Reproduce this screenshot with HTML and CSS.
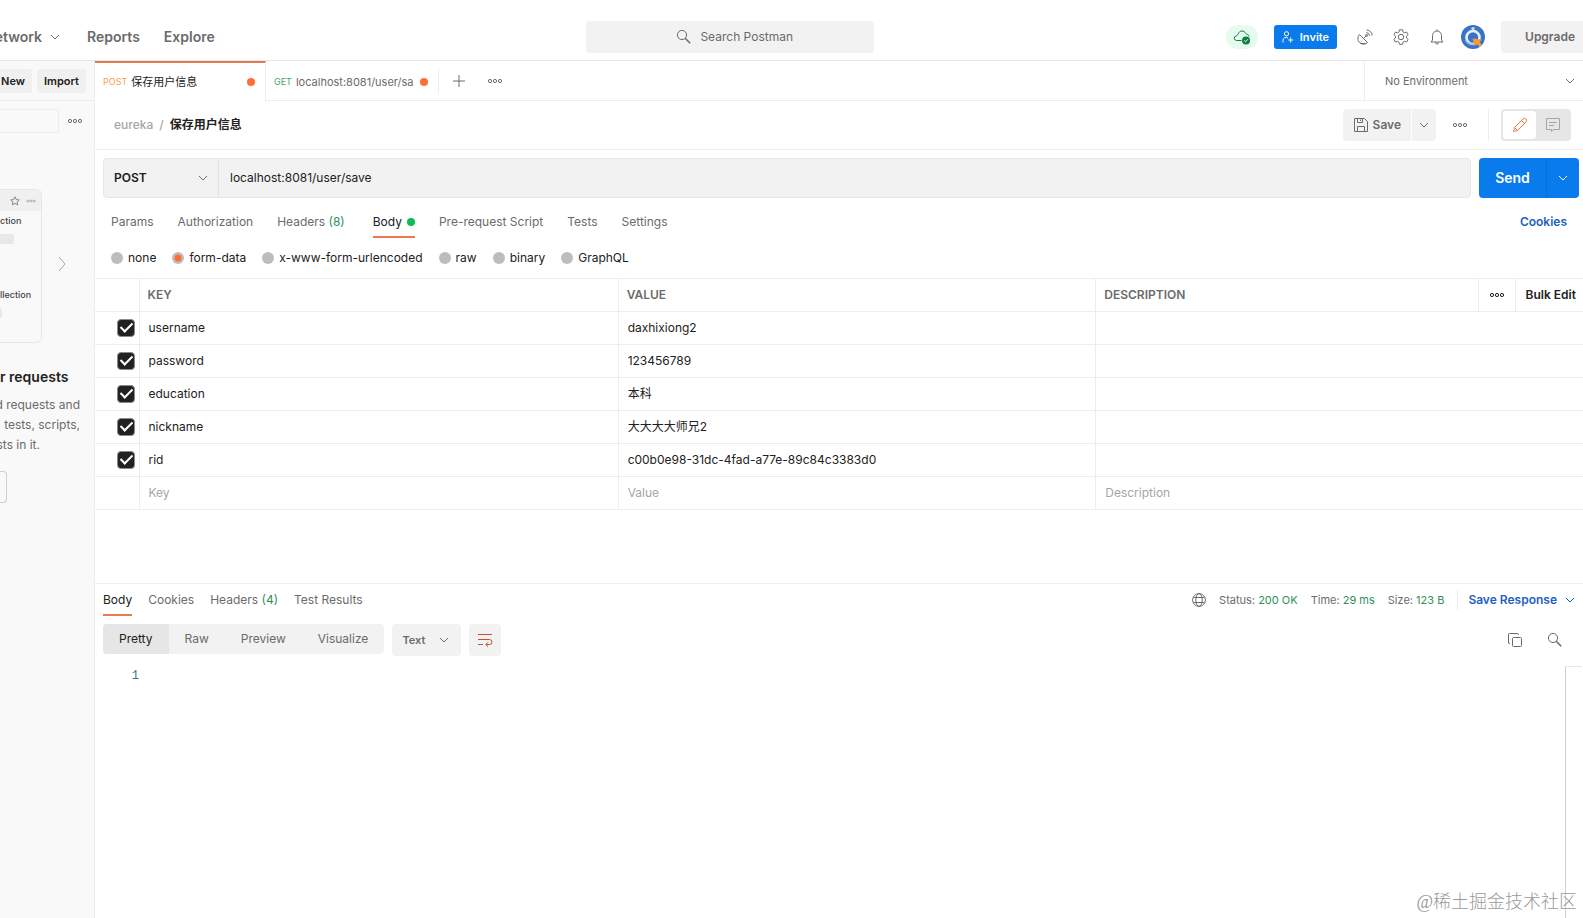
FILE: index.html
```html
<!DOCTYPE html>
<html lang="en">
<head>
    <meta charset="UTF-8">
    <meta name="viewport" content="width=device-width, initial-scale=1.0">
    <title>Postman</title>
    <link rel="stylesheet" href="styles.css">
</head>
<body>
    <!-- Shared icons -->
    <svg class="sprite" aria-hidden="true">
        <symbol id="chevron" viewBox="0 0 10 10"><path d="M1 3l4 4 4-4"/></symbol>
        <symbol id="dots" viewBox="0 0 16 6"><circle cx="3" cy="3" r="1.6"/><circle cx="8" cy="3" r="1.6"/><circle cx="13" cy="3" r="1.6"/></symbol>
        <symbol id="search" viewBox="0 0 16 16"><circle cx="6" cy="6" r="4.6"/><path d="M9.2 9.2l5 5" stroke-width="1.6"/></symbol>
    </svg>

    <header class="topbar">
        <nav class="topnav">
            <a href="#" class="network">etwork <svg class="icon chevron"><use href="#chevron"/></svg></a>
            <a href="#">Reports</a>
            <a href="#">Explore</a>
        </nav>
        <button class="search"><svg class="icon i16"><use href="#search"/></svg>Search Postman</button>
        <div class="top-actions">
            <button class="sync" aria-label="Synced">
                <svg class="icon i18" viewBox="0 0 18 18"><path d="M8.500 12.500H3.500A2.300 2.300 0 0 1 3 8C5.500 7.500 5 3 9 3C12 3 12.500 5.500 13.500 6.200C15.500 6.500 16 7.500 16 8.500"/><circle cx="13" cy="12.500" r="4" class="solid"/><path d="M11.200 12.500l1.300 1.300 2.300-2.500" class="tick"/></svg>
            </button>
            <button class="invite">
                <svg class="icon i12" viewBox="0 0 12 12"><circle cx="4.500" cy="2.800" r="2.100"/><path d="M1 11.500V9.800A3 3 0 0 1 6 7.200M8.700 6.500v5M6.200 9h5"/></svg>
                Invite
            </button>
            <button class="plain" aria-label="Capture requests">
                <svg class="icon i16" viewBox="0 0 16 16"><path d="M2.500 5.500a5.600 5.600 0 0 0 8 8zM3.500 14.500h5M6.500 9.500l3-3"/><circle cx="9.600" cy="6.400" r="1"/><path d="M9.300 3.600a3.200 3.200 0 0 1 3.200 3.200M9.500 1a5.600 5.600 0 0 1 5.600 5.600"/></svg>
            </button>
            <button class="plain" aria-label="Settings">
                <svg class="icon i16" viewBox="0 0 16 16"><path d="M6.500.8h3l.5 2.100 1.500.9 2.100-.7 1.500 2.600-1.600 1.500v1.700l1.600 1.500-1.500 2.600-2.100-.7-1.500.9-.5 2.100h-3L6 13.200l-1.500-.9-2.100.7-1.500-2.600 1.600-1.500V7.200L.9 5.700l1.500-2.600 2.100.7L6 2.900z"/><circle cx="8" cy="8" r="2.700"/></svg>
            </button>
            <button class="plain" aria-label="Notifications">
                <svg class="icon i16" viewBox="0 0 16 16"><path d="M2 13h12l-1.500-2V6.500a4.500 4.500 0 0 0-9 0V11zM8 2V.5M6.500 13.500a1.500 1.500 0 0 0 3 0"/></svg>
            </button>
            <button class="plain avatar" aria-label="Account">
                <svg viewBox="0 0 24 24"><circle cx="12" cy="12" r="12" fill="#3972c6"/><circle cx="12" cy="12.500" r="6.500" fill="#3972c6" stroke="#e8f0fb" stroke-width="2.600"/><path d="M4.500 15a8 6 0 0 0 10 4" fill="none" stroke="#9dbde8" stroke-width="1.500"/><circle cx="12" cy="3.600" r="1.700" fill="#c9dbf3"/><path d="M11.500 13.500l9.500 1-2.500 2.500 2.500 3-2.500 2-2.500-3-2.500 2z" fill="#f59a35"/></svg>
            </button>
            <button class="upgrade">Upgrade</button>
        </div>
    </header>

    <div class="workspace">
        <aside class="sidebar">
            <div class="side-head">
                <button>New</button>
                <button>Import</button>
            </div>
            <div class="side-filter">
                <input type="text" aria-label="Filter">
                <button class="plain" aria-label="More"><svg class="icon dots"><use href="#dots"/></svg></button>
            </div>
            <div class="carousel">
                <div class="card">
                    <div class="card-head">
                        <svg class="icon i10" viewBox="0 0 10 10"><path d="M5 .8l1.300 2.800 3 .3-2.200 2 .6 3L5 7.400 2.300 8.900l.6-3-2.200-2 3-.3z"/></svg>
                        <svg class="icon i10" viewBox="0 0 16 6"><use href="#dots"/></svg>
                    </div>
                    <div class="card-item">ction<span class="bar"></span></div>
                    <div class="card-item">llection<span class="bar short"></span></div>
                </div>
                <button class="plain next" aria-label="Next"><svg class="icon" viewBox="0 0 8 16"><path d="M1 1l6 7-6 7"/></svg></button>
            </div>
            <h2>r requests</h2>
            <p class="side-text">
                <span>d requests and</span>
                <span>tests, scripts,</span>
                <span class="last">sts in it.</span>
            </p>
            <button class="create" aria-label="Create collection"></button>
        </aside>

        <main class="main">
            <div class="tabbar">
                <button class="tab active"><span class="method post">POST</span><span class="tab-name">保存用户信息</span><i class="dot"></i></button>
                <button class="tab"><span class="method get">GET</span><span class="tab-name">localhost:8081/user/sa</span><i class="dot"></i></button>
                <div class="tab-tools">
                    <button class="plain" aria-label="New tab"><svg class="icon i12" viewBox="0 0 12 12"><path d="M6 0v12M0 6h12"/></svg></button>
                    <button class="plain" aria-label="Tab options"><svg class="icon dots"><use href="#dots"/></svg></button>
                </div>
                <button class="env">No Environment <svg class="icon chevron"><use href="#chevron"/></svg></button>
            </div>

            <div class="titlebar">
                <div class="crumbs"><a href="#">eureka</a><span>/</span><strong>保存用户信息</strong></div>
                <div class="title-actions">
                    <div class="split">
                        <button class="save">
                            <svg class="icon i16" viewBox="0 0 16 16"><path d="M1.500 1.500h10l3 3v10h-13zM4.500 1.500v4h5v-4M4.500 14.500v-5h7v5M7.500 2.500v1.500"/></svg>
                            Save
                        </button>
                        <button class="save-more" aria-label="Save options"><svg class="icon chevron"><use href="#chevron"/></svg></button>
                    </div>
                    <button class="plain more" aria-label="More actions"><svg class="icon dots"><use href="#dots"/></svg></button>
                    <div class="toggle">
                        <button class="on" aria-label="Edit"><svg class="icon i16" viewBox="0 0 16 16"><path d="M1.500 14.500l1-4L11 2a1.800 1.800 0 0 1 3 3l-8.500 8.500zM2.500 10.500l3 3M9.500 3.500l3 3"/></svg></button>
                        <button aria-label="Comments"><svg class="icon i16" viewBox="0 0 16 16"><path d="M1.500 1.500h13v11h-6l-2 2v-2h-5zM4 5.500h8M4 8.500h5"/></svg></button>
                    </div>
                </div>
            </div>

            <div class="urlbar">
                <div class="url">
                    <button class="method-pick">POST <svg class="icon chevron"><use href="#chevron"/></svg></button>
                    <input type="text" value="localhost:8081/user/save" aria-label="Request URL">
                </div>
                <div class="send">
                    <button class="send-main">Send</button>
                    <button class="send-more" aria-label="Send options"><svg class="icon chevron"><use href="#chevron"/></svg></button>
                </div>
            </div>

            <div class="req-tabs">
                <button>Params</button>
                <button>Authorization</button>
                <button class="headers">Headers <em>(8)</em></button>
                <button class="active">Body<i class="dot green"></i></button>
                <button>Pre-request Script</button>
                <button>Tests</button>
                <button>Settings</button>
                <a href="#" class="blue">Cookies</a>
            </div>

            <div class="body-types">
                <label><input type="radio" name="type">none</label>
                <label><input type="radio" name="type" checked>form-data</label>
                <label><input type="radio" name="type">x-www-form-urlencoded</label>
                <label><input type="radio" name="type">raw</label>
                <label><input type="radio" name="type">binary</label>
                <label><input type="radio" name="type">GraphQL</label>
            </div>

            <table class="params">
                <colgroup><col class="c-check"><col class="c-key"><col class="c-value"><col><col class="c-more"><col class="c-bulk"></colgroup>
                <thead>
                    <tr>
                        <th></th><th>KEY</th><th>VALUE</th><th>DESCRIPTION</th>
                        <th class="center"><button class="plain" aria-label="Columns"><svg class="icon dots"><use href="#dots"/></svg></button></th>
                        <th><button class="plain bulk">Bulk Edit</button></th>
                    </tr>
                </thead>
                <tbody>
                    <tr><td><input type="checkbox" checked aria-label="username"></td><td>username</td><td>daxhixiong2</td><td colspan="3"></td></tr>
                    <tr><td><input type="checkbox" checked aria-label="password"></td><td>password</td><td>123456789</td><td colspan="3"></td></tr>
                    <tr><td><input type="checkbox" checked aria-label="education"></td><td>education</td><td>本科</td><td colspan="3"></td></tr>
                    <tr><td><input type="checkbox" checked aria-label="nickname"></td><td>nickname</td><td>大大大大师兄2</td><td colspan="3"></td></tr>
                    <tr><td><input type="checkbox" checked aria-label="rid"></td><td>rid</td><td>c00b0e98-31dc-4fad-a77e-89c84c3383d0</td><td colspan="3"></td></tr>
                    <tr><td></td><td><input type="text" placeholder="Key" aria-label="Key"></td><td><input type="text" placeholder="Value" aria-label="Value"></td><td colspan="3"><input type="text" placeholder="Description" aria-label="Description"></td></tr>
                </tbody>
            </table>

            <section class="response">
                <div class="res-head">
                    <div class="res-tabs">
                        <button class="active">Body</button>
                        <button>Cookies</button>
                        <button>Headers <em>(4)</em></button>
                        <button>Test Results</button>
                    </div>
                    <div class="res-meta">
                        <svg class="icon i14" viewBox="0 0 14 14"><circle cx="7" cy="7" r="6.400"/><ellipse cx="7" cy="7" rx="3.200" ry="6.400"/><path d="M1.500 4.500h11M1.500 9.500h11"/></svg>
                        <span>Status: <em>200 OK</em></span>
                        <span>Time: <em>29 ms</em></span>
                        <span>Size: <em>123 B</em></span>
                        <button class="blue save-res">Save Response <svg class="icon chevron"><use href="#chevron"/></svg></button>
                    </div>
                </div>
                <div class="res-tools">
                    <div class="views">
                        <button class="active">Pretty</button>
                        <button>Raw</button>
                        <button>Preview</button>
                        <button>Visualize</button>
                    </div>
                    <button class="lang">Text <svg class="icon chevron"><use href="#chevron"/></svg></button>
                    <button class="wrap" aria-label="Wrap lines"><svg class="icon i16" viewBox="0 0 16 16"><path d="M1 2.500h14M1 7.500h11.500a2.500 2.500 0 0 1 0 5H9M1 12.500h5M11 10.300l-2.200 2.200 2.200 2.200"/></svg></button>
                    <div class="res-icons">
                        <button class="plain" aria-label="Copy"><svg class="icon i16" viewBox="0 0 16 16"><path d="M3 11.500H2A1 1 0 0 1 1.500 11V2a1 1 0 0 1 1-.5H10.500a1 1 0 0 1 1 1V3"/><rect x="5.500" y="5.500" width="9" height="9" rx="1"/></svg></button>
                        <button class="plain" aria-label="Find"><svg class="icon i16"><use href="#search"/></svg></button>
                    </div>
                </div>
                <div class="editor">
                    <code>1</code>
                    <div class="ruler"></div>
                </div>
            </section>
        </main>
    </div>
    <div class="watermark">@稀土掘金技术社区</div>
</body>
</html>
```

FILE: styles.css
```css
* {
    box-sizing: border-box;
}
body {
    margin: 0;
    min-height: 100vh;
    display: flex;
    flex-direction: column;
    position: relative;
    overflow: hidden;
    font-family: Inter, "Noto Sans CJK SC", sans-serif;
    font-size: 12px;
    line-height: 16px;
    color: #212121;
    background: #fff;
}
button, input {
    font: inherit;
    color: inherit;
    border: 0;
    margin: 0;
    padding: 0;
    background: none;
}
button {
    display: flex;
    align-items: center;
    white-space: nowrap;
}
a {
    color: inherit;
    text-decoration: none;
}
em {
    font-style: normal;
    color: #2f8f5b;
}
.blue {
    color: #1f5fc4;
    font-weight: 600;
}

/* icons */
.sprite {
    position: absolute;
    width: 0;
    height: 0;
}
.icon {
    display: block;
    flex: none;
    fill: none;
    stroke: currentColor;
    stroke-width: 1;
}
.i10 { width: 10px; height: 10px; }
.i12 { width: 12px; height: 12px; }
.i14 { width: 14px; height: 14px; }
.i16 { width: 16px; height: 16px; }
.i18 { width: 18px; height: 18px; }
.chevron { width: 10px; height: 10px; }
.dots { width: 16px; height: 6px; }
.plain {
    color: #6b6b6b;
}

/* top bar */
.topbar {
    height: 61px;
    padding-top: 14px;
    display: flex;
    align-items: center;
    border-bottom: 1px solid #e6e6e6;
    color: #6b6b6b;
}
.topnav {
    width: 37%;
    display: flex;
    gap: 24px;
    font-size: 14px;
    font-weight: 600;
}
.network {
    display: flex;
    align-items: center;
    justify-content: flex-end;
    gap: 8px;
    width: 60px;
    margin-right: 3px;
}
.search {
    width: 288px;
    height: 32px;
    padding-left: 10px;
    justify-content: center;
    gap: 8px;
    border-radius: 4px;
    background: #f2f2f2;
}
.top-actions {
    flex: 1;
    display: flex;
    align-items: center;
    justify-content: flex-end;
    gap: 20px;
}
.sync {
    width: 32px;
    height: 24px;
    margin-right: -4px;
    justify-content: center;
    border-radius: 12px;
    background: #e5fbee;
    color: #0a7f3f;
}
.solid {
    fill: #0a7f3f;
    stroke: none;
}
.tick {
    stroke: #fff;
}
.invite {
    height: 24px;
    padding: 0 8px;
    gap: 6px;
    border-radius: 3px;
    background: #097bed;
    color: #fff;
    font-size: 11px;
    font-weight: 600;
}
.avatar {
    margin: 0 -4px;
}
.avatar svg {
    display: block;
    width: 24px;
    height: 24px;
}
.upgrade {
    height: 32px;
    padding: 0 8px 0 24px;
    border-radius: 4px 0 0 4px;
    background: #f2f2f2;
    font-weight: 600;
}

/* sidebar */
.workspace {
    flex: 1;
    display: flex;
}
.sidebar {
    width: 95px;
    flex: none;
    overflow: hidden;
    background: #f9f9f9;
    border-right: 1px solid #ededed;
}
.side-head {
    height: 40px;
    padding-right: 8px;
    display: flex;
    align-items: center;
    justify-content: flex-end;
    gap: 5px;
    border-bottom: 1px solid #ededed;
}
.side-head button {
    height: 24px;
    padding: 0 7px;
    border-radius: 3px;
    background: #f0f0f0;
    font-size: 11px;
    font-weight: 600;
}
.side-filter {
    display: flex;
    align-items: center;
    gap: 8px;
    padding-top: 8px;
}
.side-filter input {
    width: 59px;
    height: 24px;
    border: 1px solid #ededed;
    border-left: 0;
}
.carousel {
    margin-top: 56px;
    display: flex;
    align-items: center;
    gap: 16px;
}
.card {
    width: 42px;
    height: 154px;
    overflow: hidden;
    border: 1px solid #e6e6e6;
    border-left: 0;
    border-radius: 0 6px 6px 0;
    font-size: 9px;
    font-weight: 500;
    color: #444;
}
.card-head {
    height: 21px;
    padding: 0 5px;
    display: flex;
    align-items: center;
    justify-content: flex-end;
    gap: 6px;
    background: #f0f0f0;
    color: #888;
}
.card-item {
    height: 74px;
    padding-top: 2px;
}
.bar {
    display: block;
    width: 14px;
    height: 10px;
    margin-top: 5px;
    border-radius: 0 2px 2px 0;
    background: #e8e8e8;
}
.bar.short {
    width: 2px;
}
.next svg {
    width: 8px;
    height: 16px;
    color: #a6a6a6;
}
.next {
    padding-bottom: 4px;
}
.sidebar h2 {
    margin: 24px 0 8px;
    font-size: 14px;
    line-height: 20px;
    font-weight: 600;
}
.side-text {
    width: 80px;
    margin: 0;
    display: flex;
    flex-direction: column;
    align-items: flex-end;
    line-height: 20px;
    color: #6b6b6b;
    white-space: nowrap;
}
.side-text .last {
    padding-right: 40px;
}
.create {
    width: 7px;
    height: 32px;
    margin-top: 16px;
    border: 1px solid #cfcfcf;
    border-left: 0;
    border-radius: 0 4px 4px 0;
}

/* request tabs */
.main {
    flex: 1;
    min-width: 0;
    display: flex;
    flex-direction: column;
}
.tabbar {
    height: 40px;
    display: flex;
    color: #6b6b6b;
}
.tab {
    width: 172px;
    padding: 2px 10px 0 8px;
    border-bottom: 1px solid #ededed;
    font-size: 11px;
}
.tab.active {
    width: 171px;
    padding-top: 0;
    border-top: 2px solid #e07a50;
    border-bottom: 0;
    border-right: 1px solid #ededed;
    color: #212121;
}
.method {
    margin-right: 4px;
    font-size: 9px;
}
.post {
    color: #f5a04f;
}
.get {
    color: #3fa66b;
}
.tab-name {
    flex: 1;
    text-align: left;
}
.dot {
    flex: none;
    width: 8px;
    height: 8px;
    border-radius: 50%;
    background: #ff6c37;
}
.dot.green {
    margin-left: 5px;
    background: #0cbb52;
}
.tab-tools {
    flex: 1;
    display: flex;
    align-items: center;
    gap: 22px;
    border-bottom: 1px solid #ededed;
}
.tab-tools::before {
    content: "";
    width: 1px;
    height: 24px;
    margin-right: -8px;
    background: #ededed;
}
.env {
    width: 219px;
    padding: 0 8px 0 20px;
    justify-content: space-between;
    border-left: 1px solid #ededed;
    border-bottom: 1px solid #ededed;
    font-size: 11px;
}
.titlebar {
    height: 49px;
    padding: 0 12px 0 19px;
    display: flex;
    align-items: center;
    justify-content: space-between;
    border-bottom: 1px solid #ededed;
}
.crumbs {
    display: flex;
    gap: 6px;
    color: #a6a6a6;
    font-weight: 500;
}
.crumbs strong {
    color: #212121;
    font-weight: 600;
}
.title-actions {
    display: flex;
    align-items: center;
    gap: 12px;
    color: #6b6b6b;
}
.split {
    display: flex;
    gap: 1px;
}
.split button {
    height: 32px;
    background: #f2f2f2;
}
.split .save {
    padding: 0 10px;
    gap: 4px;
    border-radius: 4px 0 0 4px;
    font-weight: 600;
}
.split .save-more {
    padding: 0 7px;
    border-radius: 0 4px 4px 0;
}
.more {
    height: 32px;
    padding: 0 20px 0 4px;
    border-right: 1px solid #ededed;
}
.toggle {
    display: flex;
    height: 32px;
    padding: 2px;
    border-radius: 4px;
    background: #e6e6e6;
}
.toggle button {
    width: 33px;
    justify-content: center;
    border-radius: 3px;
    color: #a6a6a6;
}
.toggle .on {
    background: #fff;
    color: #ec7a50;
}

/* url */
.urlbar {
    display: flex;
    gap: 8px;
    padding: 8px 4px 0 8px;
}
.url {
    flex: 1;
    display: flex;
    height: 40px;
    border: 1px solid #e6e6e6;
    border-radius: 4px;
    background: #f2f2f2;
}
.method-pick {
    width: 115px;
    padding: 0 10px;
    justify-content: space-between;
    border-right: 1px solid #e0e0e0;
    font-weight: 600;
}
.method-pick .icon {
    color: #6b6b6b;
}
.url input {
    flex: 1;
    padding: 0 11px;
}
.send {
    display: flex;
    height: 40px;
    border-radius: 4px;
    overflow: hidden;
    background: #097bed;
    color: #fff;
}
.send-main {
    width: 67px;
    justify-content: center;
    font-size: 14px;
    font-weight: 600;
}
.send-more {
    width: 33px;
    justify-content: center;
    border-left: 1px solid #0a70d6;
}
.req-tabs {
    display: flex;
    gap: 24px;
    padding: 8px 16px 0;
    color: #6b6b6b;
}
.req-tabs button, .res-tabs button {
    height: 32px;
    padding-top: 2px;
    border-bottom: 2px solid transparent;
    white-space: pre;
}
.req-tabs .headers {
    margin-right: 4px;
}
.req-tabs .active, .res-tabs .active {
    border-color: #ec7a50;
    color: #212121;
}
.req-tabs a {
    margin-left: auto;
    line-height: 32px;
}
.body-types {
    display: flex;
    gap: 16px;
    height: 40px;
    padding: 0 16px;
    align-items: center;
}
.body-types label {
    display: flex;
    align-items: center;
    gap: 5px;
}
.body-types input {
    appearance: none;
    width: 12px;
    height: 12px;
    border-radius: 50%;
    background: #bdbdbd;
}
.body-types input:checked {
    background: radial-gradient(circle, #ff6c37 3px, #bdbdbd 4px);
}

/* form-data table */
.params {
    width: 100%;
    table-layout: fixed;
    border-collapse: collapse;
}
.c-check { width: 44px; }
.c-key { width: 32.2%; }
.c-value { width: 32.1%; }
.c-more { width: 37px; }
.c-bulk { width: 68px; }
.params th, .params td {
    height: 33px;
    padding: 0 8px;
    border: 1px solid #ededed;
    border-width: 1px 0 1px 1px;
    text-align: left;
}
.params td {
    padding: 0 9px;
}
.params th:first-child, .params td:first-child {
    border-left: 0;
    padding: 0 4px 0 22px;
}
.params th {
    color: #6b6b6b;
    font-weight: 600;
}
.params th.center {
    padding: 0 10px;
}
.params th button {
    color: #212121;
}
.params .bulk {
    margin-left: 2px;
    font-weight: 600;
}
.params input[type="text"] {
    display: block;
    width: 100%;
}
.params ::placeholder {
    color: #a6a6a6;
    opacity: 1;
}
.params input[type="checkbox"] {
    appearance: none;
    display: block;
    width: 18px;
    height: 18px;
    border: 1px solid #8a8a8a;
    border-radius: 4px;
    background: #212121;
}
.params input[type="checkbox"]::before {
    content: "";
    display: block;
    box-sizing: border-box;
    width: 7px;
    height: 12px;
    margin: 0 5px;
    border: solid #fff;
    border-width: 0 2px 2px 0;
    transform: rotate(45deg);
}

/* response */
.response {
    flex: 1;
    display: flex;
    flex-direction: column;
    margin-top: 73px;
    border-top: 1px solid #ededed;
    color: #6b6b6b;
}
.res-head {
    display: flex;
    justify-content: space-between;
    padding: 0 8px;
}
.res-tabs {
    display: flex;
    gap: 16px;
}
.res-meta {
    display: flex;
    align-items: center;
    gap: 13px;
    font-size: 11px;
}
.save-res {
    gap: 8px;
    height: 20px;
    padding-left: 10px;
    border-left: 1px solid #ededed;
    font-size: 12px;
}
.res-tools {
    display: flex;
    gap: 8px;
    padding: 8px 20px 0 8px;
}
.views {
    display: flex;
    height: 30px;
    border-radius: 4px;
    overflow: hidden;
    background: #f2f2f2;
}
.views button {
    padding: 0 16px;
}
.views .active {
    background: #e6e6e6;
    color: #212121;
}
.lang, .wrap {
    height: 32px;
    border-radius: 4px;
    background: #f2f2f2;
}
.lang {
    padding: 0 12px 0 10px;
    gap: 14px;
    font-size: 11px;
    font-weight: 600;
}
.wrap {
    padding: 0 8px;
    color: #c5532b;
}
.res-icons {
    display: flex;
    gap: 24px;
    margin-left: auto;
}
.editor {
    flex: 1;
    display: flex;
    justify-content: space-between;
    padding-top: 10px;
}
.editor code {
    width: 44px;
    text-align: right;
    font-family: "Liberation Mono", monospace;
    font-size: 12px;
    line-height: 20px;
    color: #3f6f80;
}
.ruler {
    width: 17px;
    margin-right: 1px;
    border-left: 1px solid #d0d0d0;
    border-top: 1px solid #e6e6e6;
}
.watermark {
    position: absolute;
    right: 6px;
    bottom: 4px;
    font-family: "Liberation Serif", "Noto Sans CJK SC", serif;
    font-size: 18px;
    line-height: 24px;
    font-weight: 300;
    color: #9a9a9a;
}
```
